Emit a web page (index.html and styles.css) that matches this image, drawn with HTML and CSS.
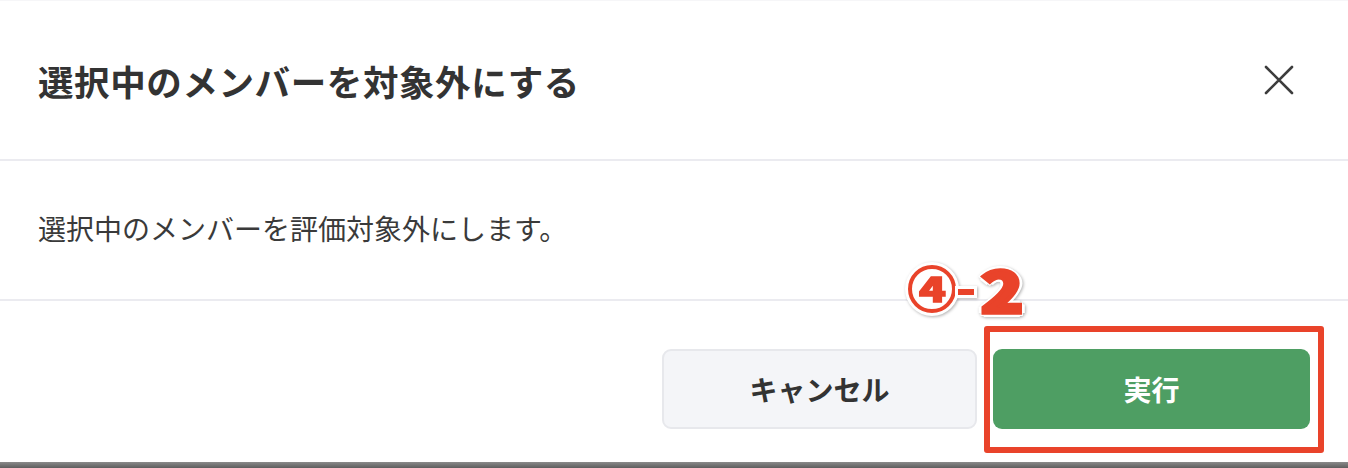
FILE: index.html
```html
<!DOCTYPE html>
<html lang="ja">
<head>
<meta charset="utf-8">
<link rel="stylesheet" href="styles.css">
</head>
<body>
<div class="modal">
  <div class="modal-header">
    <h2 class="modal-title">選択中のメンバーを対象外にする</h2>
    <button class="close-btn" aria-label="閉じる">
      <svg width="30" height="30" viewBox="0 0 30 30"><path d="M2 2 L28 28 M28 2 L2 28" stroke="#3d3d3d" stroke-width="2.6" stroke-linecap="round" fill="none"/></svg>
    </button>
  </div>
  <div class="modal-body">
    <p class="modal-text">選択中のメンバーを評価対象外にします。</p>
  </div>
  <div class="modal-footer">
    <button class="btn btn-cancel">キャンセル</button>
    <button class="btn btn-primary">実行</button>
  </div>
  <div class="bottom-bar"></div>
  <div class="annot-box"></div>
  <div class="annot-label" aria-label="④-2">
    <span class="annot-num"><span class="annot-digit">4</span></span>
    <span class="annot-dash"></span>
    <span class="annot-two">2</span>
  </div>
</div>
</body>
</html>
```
FILE: styles.css
```css
* { box-sizing: border-box; }
html, body { margin: 0; padding: 0; }
body {
  width: 1348px;
  height: 468px;
  overflow: hidden;
  background: #fff;
  font-family: "Noto Sans CJK JP", "Noto Sans", sans-serif;
  color: #333;
}
.modal {
  position: relative;
  width: 1348px;
  height: 468px;
  display: flex;
  flex-direction: column;
  border-top: 1px solid #f6f6f8;
}
.modal-header {
  height: 160px;
  flex: none;
  display: flex;
  align-items: center;
  justify-content: space-between;
  padding: 0 54px 0 38px;
  border-bottom: 2px solid #ebebf0;
}
.modal-title {
  margin: 0;
  font-size: 35.5px;
  font-weight: 700;
  color: #333;
  letter-spacing: 0.6px;
}
.close-btn {
  width: 30px;
  height: 30px;
  padding: 0;
  border: 0;
  background: none;
  display: flex;
}
.modal-body {
  height: 140px;
  flex: none;
  display: flex;
  align-items: center;
  padding: 0 38px;
  border-bottom: 2px solid #ebebf0;
}
.modal-text {
  margin: 0;
  font-size: 28px;
  color: #3a3a3a;
  padding-bottom: 4px;
}
.modal-footer {
  flex: 1;
  display: flex;
  justify-content: flex-end;
  align-items: flex-start;
  gap: 16px;
  padding: 48px 38px 0 0;
}
.btn {
  height: 80px;
  border-radius: 9px;
  font-family: "Noto Sans CJK JP", "Noto Sans", sans-serif;
  font-size: 28px;
  font-weight: 700;
}
.btn-cancel {
  width: 315px;
  background: #f4f5f8;
  border: 2px solid #e7e8ec;
  color: #333;
}
.btn-primary {
  width: 317px;
  background: #4e9e63;
  border: 0;
  color: #fff;
}
.bottom-bar {
  height: 6px;
  flex: none;
  background: linear-gradient(#8a8a8a, #5e5e5e);
}
.annot-box {
  position: absolute;
  left: 984px;
  top: 325px;
  width: 340px;
  height: 127px;
  border: 6px solid #e9432a;
  border-radius: 3px;
}
.annot-label {
  position: absolute;
  left: 908px;
  top: 264px;
  height: 48px;
  display: flex;
  align-items: center;
  filter: drop-shadow(1px 1.5px 1.5px rgba(0,0,0,0.3));
  font-family: "Noto Sans CJK JP", sans-serif;
  font-weight: 900;
  color: #e9432a;
}
.annot-num {
  width: 48px;
  height: 48px;
  flex: none;
  border-radius: 50%;
  border: 4.5px solid #e9432a;
  background: #fff;
  box-shadow: 0 0 0 3px #fff;
  display: flex;
  align-items: center;
  justify-content: center;
}
.annot-digit {
  display: block;
  font-size: 34px;
  line-height: 1;
  transform: scaleX(1.3);
  margin-top: -2px;
  -webkit-text-stroke: 1.5px #e9432a;
}
.annot-dash {
  width: 16px;
  height: 6px;
  flex: none;
  margin: 5px 0 0 2px;
  background: #e9432a;
  box-shadow: 0 0 0 3px #fff;
}
.annot-two {
  display: block;
  margin-left: 11px;
  font-size: 56px;
  line-height: 44px;
  transform: scaleX(1.25);
  -webkit-text-stroke: 3.5px #e9432a;
  text-shadow:
    3px 0 0 #fff, -3px 0 0 #fff, 0 3px 0 #fff, 0 -3px 0 #fff,
    2.5px 2.5px 0 #fff, -2.5px 2.5px 0 #fff, 2.5px -2.5px 0 #fff, -2.5px -2.5px 0 #fff,
    4px 0 0 #fff, -4px 0 0 #fff, 0 4px 0 #fff, 0 -4px 0 #fff;
}
```
